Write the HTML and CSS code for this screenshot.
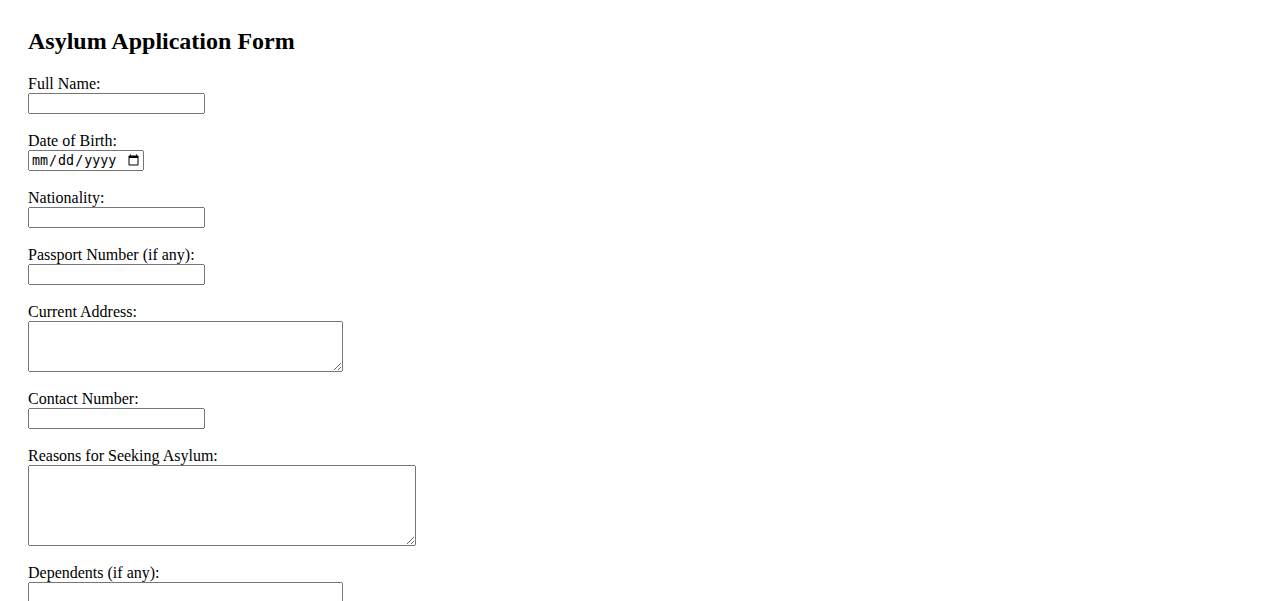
FILE: index.html
```html
<!DOCTYPE html>
<html lang="en">
<head>
    <meta charset="UTF-8">
    <meta name="viewport" content="width=device-width, initial-scale=1.0">
    <title>Asylum Application Form</title>
    <link rel="stylesheet" href="styles.css">
</head>
<body>
    <h2>Asylum Application Form</h2>

    <form class="asylum-form">
        <label for="fullName">Full Name:</label><br>
        <input type="text" id="fullName" name="fullName"><br><br>

        <label for="dob">Date of Birth:</label><br>
        <input type="date" id="dob" name="dob"><br><br>

        <label for="nationality">Nationality:</label><br>
        <input type="text" id="nationality" name="nationality"><br><br>

        <label for="passport">Passport Number (if any):</label><br>
        <input type="text" id="passport" name="passport"><br><br>

        <label for="address">Current Address:</label><br>
        <textarea id="address" name="address" class="address-box"></textarea><br><br>

        <label for="contact">Contact Number:</label><br>
        <input type="text" id="contact" name="contact"><br><br>

        <label for="reasons">Reasons for Seeking Asylum:</label><br>
        <textarea id="reasons" name="reasons" class="reasons-box"></textarea><br><br>

        <label for="dependents">Dependents (if any):</label><br>
        <textarea id="dependents" name="dependents" class="address-box"></textarea><br><br>
    </form>
</body>
</html>
```

FILE: styles.css
```css
body {
    font-family: "Liberation Serif", "Times New Roman", serif;
    font-size: 16px;
    margin: 0;
    padding: 28px;
    color: #000;
}

h2 {
    font-size: 24px;
    margin: 0 0 20px 0;
}

input[type="text"] {
    width: 177px;
    height: 21px;
    box-sizing: border-box;
    font-family: Arial, "Liberation Sans", sans-serif;
    font-size: 13.33px;
}

input[type="date"] {
    width: 116px;
    height: 21px;
    box-sizing: border-box;
}

textarea {
    box-sizing: border-box;
    font-family: "Liberation Mono", monospace;
    font-size: 13.33px;
    vertical-align: bottom;
}

.address-box {
    width: 315px;
    height: 51px;
}

.reasons-box {
    width: 388px;
    height: 81px;
}
```
